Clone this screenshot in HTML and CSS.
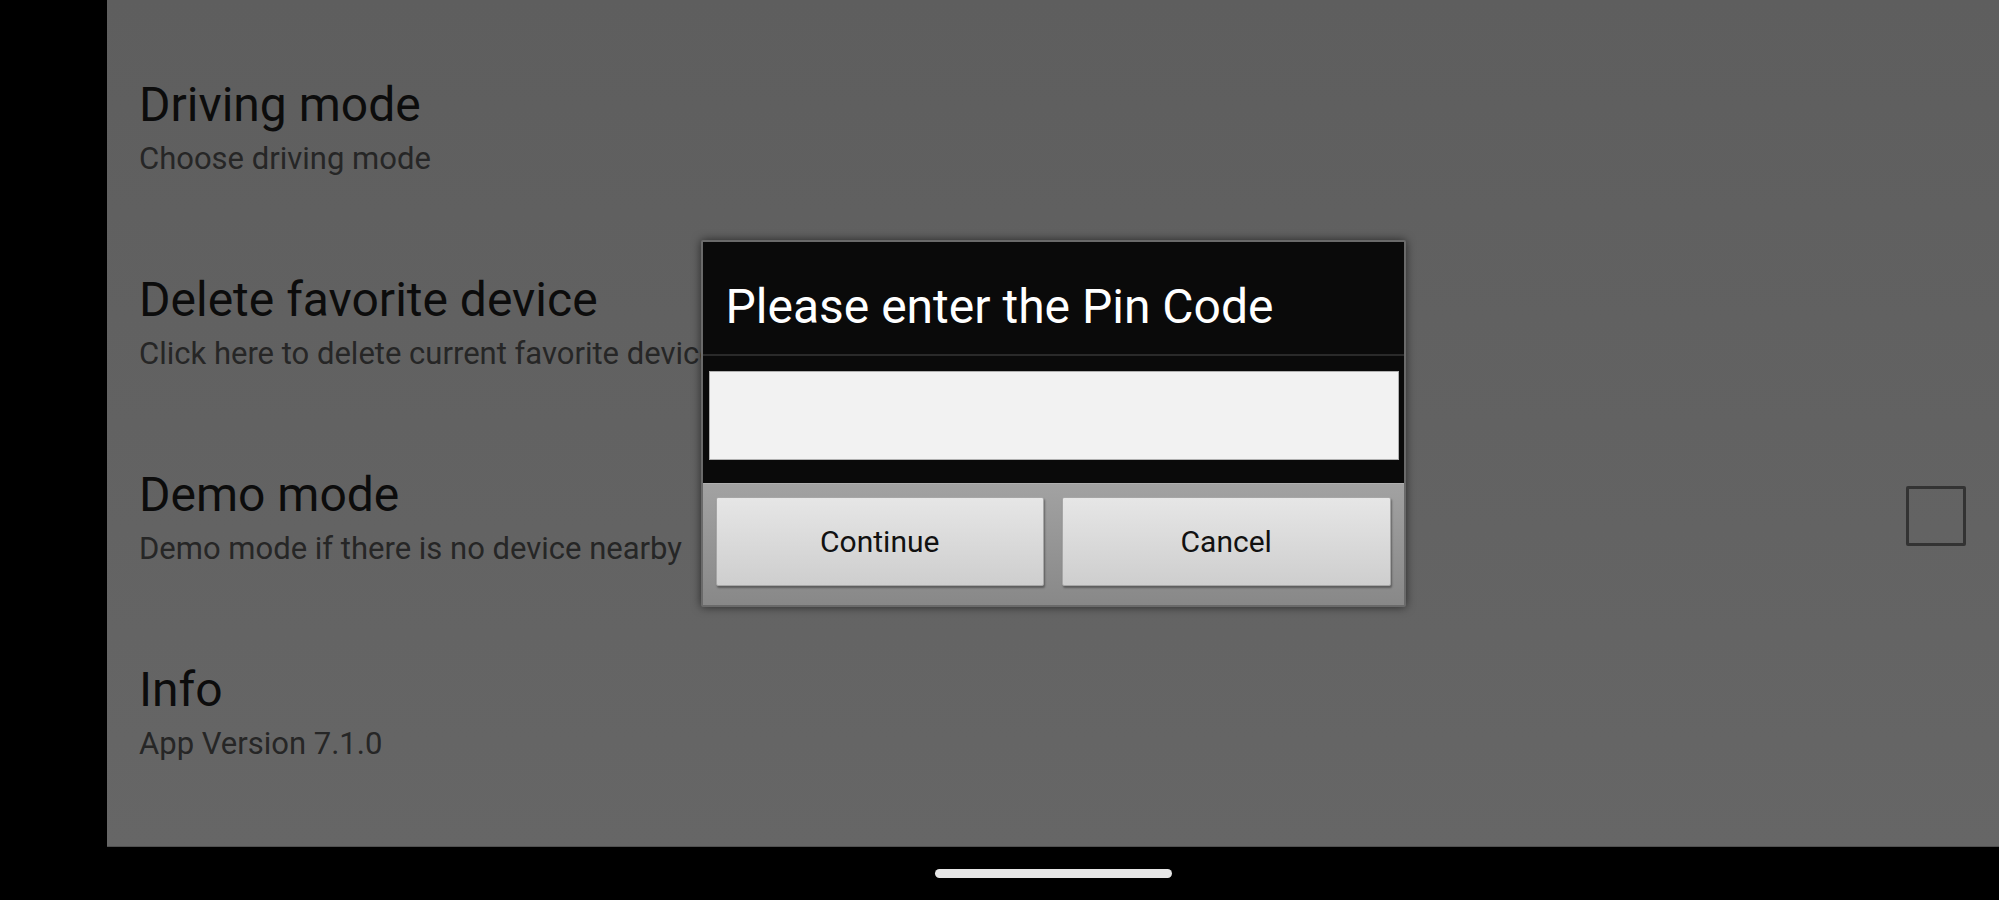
FILE: index.html
```html
<!DOCTYPE html>
<html lang="en">

<head>
    <meta charset="UTF-8">
    <meta name="viewport" content="width=device-width, initial-scale=1.0">
    <title>Settings</title>
    <link rel="stylesheet" href="styles.css">
</head>

<body>
    <div class="screen">
        <div class="side"></div>

        <div class="right">
            <div class="content">
                <!-- preference list -->
                <div class="list">
                    <div class="pref">
                        <div class="text">
                            <div class="title">Driving mode</div>
                            <div class="summary">Choose driving mode</div>
                        </div>
                    </div>
                    <div class="pref">
                        <div class="text">
                            <div class="title">Delete favorite device</div>
                            <div class="summary">Click here to delete current favorite device</div>
                        </div>
                    </div>
                    <div class="pref">
                        <div class="text">
                            <div class="title">Demo mode</div>
                            <div class="summary">Demo mode if there is no device nearby</div>
                        </div>
                        <div class="check"></div>
                    </div>
                    <div class="pref">
                        <div class="text">
                            <div class="title">Info</div>
                            <div class="summary">App Version 7.1.0</div>
                        </div>
                    </div>
                </div>

                <!-- pin dialog -->
                <div class="overlay">
                    <div class="dialog">
                        <div class="dlg-title">Please enter the Pin Code</div>
                        <div class="dlg-body">
                            <input type="password" class="pin">
                        </div>
                        <div class="dlg-buttons">
                            <button class="btn">Continue</button>
                            <button class="btn">Cancel</button>
                        </div>
                    </div>
                </div>
            </div>

            <div class="navbar">
                <div class="pill"></div>
            </div>
        </div>
    </div>
</body>

</html>
```

FILE: styles.css
```css
* {
    padding: 0;
    margin: 0;
    box-sizing: border-box;
}

body {
    background-color: black;
    font-family: Roboto, "Liberation Sans", sans-serif;
}

.screen {
    width: 1999px;
    height: 900px;
    display: flex;
}

.side {
    width: 107px;
    background-color: black;
}

.right {
    flex: 1;
    display: flex;
    flex-direction: column;
}

.content {
    position: relative;
    height: 847px;
    background: linear-gradient(#5e5e5e, #666666);
    border-bottom: 1px solid #505050;
}

.list {
    display: flex;
    flex-direction: column;
    gap: 91px;
    padding: 77px 33px 0 32px;
}

.pref {
    display: flex;
    align-items: center;
    justify-content: space-between;
}

.title {
    font-size: 48px;
    line-height: 56px;
    color: #0c0c0c;
}

.summary {
    margin-top: 3px;
    font-size: 31px;
    line-height: 45px;
    color: #262626;
}

.check {
    width: 60px;
    height: 60px;
    border: 3px solid #333333;
    border-radius: 2px;
    margin-bottom: 6px;
}

.overlay {
    position: absolute;
    top: 0;
    left: 0;
    right: 0;
    bottom: 0;
    display: flex;
    justify-content: center;
    align-items: center;
}

.dialog {
    width: 705px;
    border: 2px solid #6a6a6a;
    border-radius: 2px;
    background-color: #0a0a0a;
    box-shadow: 0 0 10px rgba(0, 0, 0, 0.6);
}

.dlg-title {
    height: 114px;
    padding: 37px 0 0 23px;
    font-size: 48px;
    line-height: 56px;
    color: white;
    border-bottom: 2px solid #2a2a2a;
}

.dlg-body {
    padding: 15px 5px 23px 6px;
}

.pin {
    display: block;
    width: 100%;
    height: 89px;
    background-color: #f2f2f2;
    border: 1px solid #b0b0b0;
    outline: none;
}

.dlg-buttons {
    display: flex;
    gap: 18px;
    padding: 13px 13px 19px 13px;
    background: linear-gradient(#a2a2a2, #888888);
    border-top: 1px solid #b0b0b0;
}

.btn {
    flex: 1;
    height: 89px;
    font-family: Roboto, "Liberation Sans", sans-serif;
    font-size: 30px;
    color: #111111;
    background: linear-gradient(#e6e6e6, #cecece);
    border: 1px solid #a6a6a6;
    border-radius: 2px;
    box-shadow: 1px 2px 2px rgba(0, 0, 0, 0.35);
}

.navbar {
    flex: 1;
    display: flex;
    justify-content: center;
    padding-top: 22px;
}

.pill {
    width: 237px;
    height: 9px;
    border-radius: 5px;
    background-color: #e6e6e6;
}
```
